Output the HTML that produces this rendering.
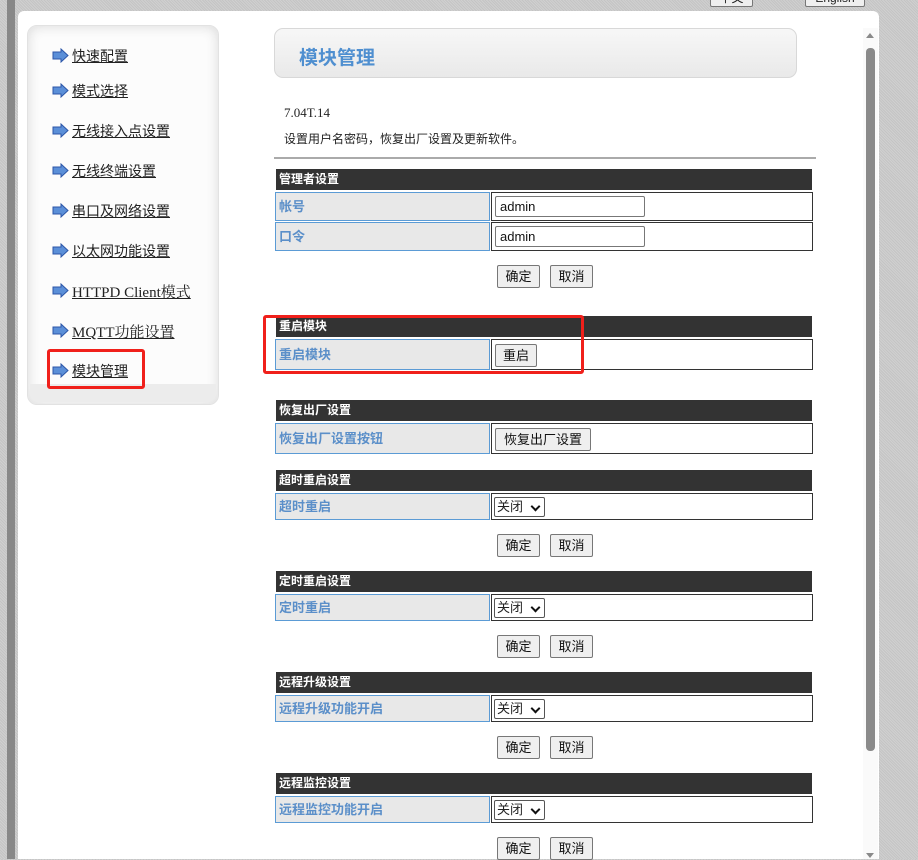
<!DOCTYPE html>
<html><head><meta charset="utf-8">
<style>
*{box-sizing:border-box;margin:0;padding:0}
body{width:918px;height:859px;overflow:hidden;position:relative;background:#c9c9c9;background-image:repeating-linear-gradient(45deg,#c4c4c4 0 1px,#d0d0d0 1px 2px);font-family:"Liberation Sans","Noto Sans CJK SC",sans-serif;font-size:13px;color:#222}
.a{position:absolute}
.hd{position:absolute;left:276px;width:536px;height:21px;background:#333;color:#fff;font-weight:bold;font-size:12px;line-height:21px;padding-left:3px}
.lb{position:absolute;left:275px;width:215px;border:1px solid #5b9bd5;background:#e8e8e8;color:#5b8fc9;font-weight:bold;font-size:13px;padding-left:3px}
.vl{position:absolute;left:491px;width:322px;border:1px solid #333;background:#fff}
.bt{position:absolute;height:23px;border:1px solid #777;border-radius:2px;background:#efefef;font-size:13px;text-align:center;line-height:21px;color:#111}
.inp{position:absolute;left:3px;top:3px;width:150px;height:21px;border:1px solid #777;border-radius:2px;padding-left:4px;font-size:13px;line-height:19px;color:#111}
.sel{position:absolute;left:2px;top:3px;width:51px;height:20px;border:1px solid #555;border-radius:2px;font-size:13px;line-height:18px;padding-left:2px;background:#fff}
.sel:after{content:"";position:absolute;right:5px;top:5px;width:5px;height:5px;border-right:2px solid #111;border-bottom:2px solid #111;transform:rotate(45deg)}
.mi{position:absolute;left:52px;font-size:14px;color:#222}
.mi svg{position:absolute;left:0;top:2px}
.mi span{position:absolute;left:20px;white-space:nowrap;text-decoration:underline}
</style></head><body>
<div class="a" style="left:7px;top:0;width:8px;height:859px;background:#888"></div>
<div class="a" style="left:710px;top:-10px;width:43px;height:17px;border:1px solid #777;border-radius:2px;background:#efefef;font-size:12px;text-align:center;line-height:15px">中文</div>
<div class="a" style="left:805px;top:-10px;width:60px;height:17px;border:1px solid #777;border-radius:2px;background:#efefef;font-size:12px;text-align:center;line-height:15px">English</div>
<div class="a" style="left:18px;top:11px;width:861px;height:848px;background:#fff;border-radius:6px 6px 0 0"></div>
<div class="a" style="left:863px;top:28px;width:15px;height:831px;background:#fafafa"></div>
<div class="a" style="left:866px;top:48px;width:9px;height:703px;background:#8a8a8a;border-radius:4px"></div>
<div class="a" style="left:866px;top:33px;width:0;height:0;border-left:4.5px solid transparent;border-right:4.5px solid transparent;border-bottom:5px solid #8a8a8a"></div>
<div class="a" style="left:866px;top:853px;width:0;height:0;border-left:4.5px solid transparent;border-right:4.5px solid transparent;border-top:5px solid #8a8a8a"></div>

<div class="a" style="left:27px;top:25px;width:192px;height:380px;border-radius:10px;background:#fcfcfc;box-shadow:inset 0 0 12px #d8d8d8;border:1px solid #e2e2e2"></div>
<div class="a" style="left:30px;top:384px;width:186px;height:18px;background:#ececec;border-radius:0 0 9px 9px"></div>

<div class="mi" style="top:46px"><svg width="17" height="15" viewBox="0 0 17 15"><path d="M1 4h8V1l7 6.5-7 6.5v-3H1z" fill="#5b8fd8" stroke="#2c56a8"/></svg><span>快速配置</span></div>
<div class="mi" style="top:81px"><svg width="17" height="15" viewBox="0 0 17 15"><path d="M1 4h8V1l7 6.5-7 6.5v-3H1z" fill="#5b8fd8" stroke="#2c56a8"/></svg><span>模式选择</span></div>
<div class="mi" style="top:121px"><svg width="17" height="15" viewBox="0 0 17 15"><path d="M1 4h8V1l7 6.5-7 6.5v-3H1z" fill="#5b8fd8" stroke="#2c56a8"/></svg><span>无线接入点设置</span></div>
<div class="mi" style="top:161px"><svg width="17" height="15" viewBox="0 0 17 15"><path d="M1 4h8V1l7 6.5-7 6.5v-3H1z" fill="#5b8fd8" stroke="#2c56a8"/></svg><span>无线终端设置</span></div>
<div class="mi" style="top:201px"><svg width="17" height="15" viewBox="0 0 17 15"><path d="M1 4h8V1l7 6.5-7 6.5v-3H1z" fill="#5b8fd8" stroke="#2c56a8"/></svg><span>串口及网络设置</span></div>
<div class="mi" style="top:241px"><svg width="17" height="15" viewBox="0 0 17 15"><path d="M1 4h8V1l7 6.5-7 6.5v-3H1z" fill="#5b8fd8" stroke="#2c56a8"/></svg><span>以太网功能设置</span></div>
<div class="mi" style="top:281px"><svg width="17" height="15" viewBox="0 0 17 15"><path d="M1 4h8V1l7 6.5-7 6.5v-3H1z" fill="#5b8fd8" stroke="#2c56a8"/></svg><span style="font-family:'Liberation Serif','Noto Serif CJK SC',serif;font-size:15px">HTTPD Client模式</span></div>
<div class="mi" style="top:321px"><svg width="17" height="15" viewBox="0 0 17 15"><path d="M1 4h8V1l7 6.5-7 6.5v-3H1z" fill="#5b8fd8" stroke="#2c56a8"/></svg><span style="font-family:'Liberation Serif','Noto Serif CJK SC',serif;font-size:15px">MQTT功能设置</span></div>
<div class="mi" style="top:361px"><svg width="17" height="15" viewBox="0 0 17 15"><path d="M1 4h8V1l7 6.5-7 6.5v-3H1z" fill="#5b8fd8" stroke="#2c56a8"/></svg><span>模块管理</span></div>
<div class="a" style="left:47px;top:349px;width:98px;height:40px;border:3px solid #f0201b;border-radius:3px"></div>

<div class="a" style="left:274px;top:28px;width:523px;height:50px;border:1px solid #d8d8d8;border-radius:9px;background:linear-gradient(#f7f7f7,#e9e9e9)"></div>
<div class="a" style="left:299px;top:43px;font-size:19px;font-weight:bold;color:#4f8fd0">模块管理</div>
<div class="a" style="left:284px;top:105px;font-family:'Liberation Serif',serif;font-size:13px">7.04T.14</div>
<div class="a" style="left:284px;top:130px;font-size:12px">设置用户名密码，恢复出厂设置及更新软件。</div>
<div class="a" style="left:274px;top:157px;width:542px;height:2px;background:#aaa"></div>

<div class="hd" style="top:169px">管理者设置</div>
<div class="lb" style="top:192px;height:29px;line-height:27px">帐号</div>
<div class="vl" style="top:192px;height:29px"><div class="inp">admin</div></div>
<div class="lb" style="top:222px;height:29px;line-height:27px">口令</div>
<div class="vl" style="top:222px;height:29px"><div class="inp">admin</div></div>
<div class="bt" style="left:497px;top:265px;width:43px">确定</div>
<div class="bt" style="left:550px;top:265px;width:43px">取消</div>

<div class="hd" style="top:316px">重启模块</div>
<div class="lb" style="top:339px;height:31px;line-height:29px">重启模块</div>
<div class="vl" style="top:339px;height:31px"><div class="bt" style="left:3px;top:4px;width:42px">重启</div></div>
<div class="a" style="left:263px;top:315px;width:321px;height:59px;border:3px solid #f0201b;border-radius:3px"></div>

<div class="hd" style="top:400px">恢复出厂设置</div>
<div class="lb" style="top:423px;height:31px;line-height:29px">恢复出厂设置按钮</div>
<div class="vl" style="top:423px;height:31px"><div class="bt" style="left:3px;top:4px;width:96px">恢复出厂设置</div></div>

<div class="hd" style="top:470px">超时重启设置</div>
<div class="lb" style="top:493px;height:27px;line-height:25px">超时重启</div>
<div class="vl" style="top:493px;height:27px"><div class="sel">关闭</div></div>
<div class="bt" style="left:497px;top:534px;width:43px">确定</div>
<div class="bt" style="left:550px;top:534px;width:43px">取消</div>

<div class="hd" style="top:571px">定时重启设置</div>
<div class="lb" style="top:594px;height:27px;line-height:25px">定时重启</div>
<div class="vl" style="top:594px;height:27px"><div class="sel">关闭</div></div>
<div class="bt" style="left:497px;top:635px;width:43px">确定</div>
<div class="bt" style="left:550px;top:635px;width:43px">取消</div>

<div class="hd" style="top:672px">远程升级设置</div>
<div class="lb" style="top:695px;height:27px;line-height:25px">远程升级功能开启</div>
<div class="vl" style="top:695px;height:27px"><div class="sel">关闭</div></div>
<div class="bt" style="left:497px;top:736px;width:43px">确定</div>
<div class="bt" style="left:550px;top:736px;width:43px">取消</div>

<div class="hd" style="top:773px">远程监控设置</div>
<div class="lb" style="top:796px;height:27px;line-height:25px">远程监控功能开启</div>
<div class="vl" style="top:796px;height:27px"><div class="sel">关闭</div></div>
<div class="bt" style="left:497px;top:837px;width:43px">确定</div>
<div class="bt" style="left:550px;top:837px;width:43px">取消</div>
</body></html>
